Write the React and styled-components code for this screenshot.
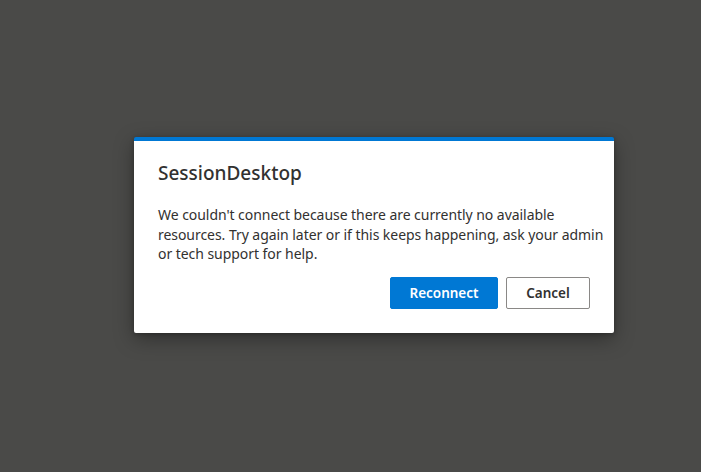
import React from "react";
import styled, { createGlobalStyle } from "styled-components";

const GlobalStyle = createGlobalStyle`
  html, body {
    margin: 0;
    padding: 0;
    height: 100%;
  }
  body {
    background: #4a4a48;
    font-family: "Noto Sans", "Open Sans", sans-serif;
  }
  #root {
    height: 100%;
  }
`;

const Backdrop = styled.div`
  width: 701px;
  height: 472px;
  display: flex;
  justify-content: center;
  padding-top: 137px;
  padding-left: 47px;
  box-sizing: border-box;
`;

const Dialog = styled.div`
  width: 480px;
  height: 196px;
  box-sizing: border-box;
  background: #ffffff;
  border-top: 4px solid #0078d4;
  border-radius: 2px;
  box-shadow: 0 6px 20px rgba(0, 0, 0, 0.35), 0 1px 4px rgba(0, 0, 0, 0.25);
  padding: 19px 24px 24px;
  display: flex;
  flex-direction: column;
`;

const Title = styled.h1`
  margin: 0;
  font-size: 19px;
  line-height: 26px;
  font-weight: 500;
  color: #323130;
`;

const Message = styled.p`
  margin: 19px -20px 0 0;
  font-size: 14px;
  line-height: 19.5px;
  color: #323130;
  letter-spacing: -0.05px;
`;

const Actions = styled.div`
  margin-top: auto;
  display: flex;
  justify-content: flex-end;
  gap: 8px;
`;

const Button = styled.button`
  height: 32px;
  min-width: ${(p) => (p.$primary ? "108px" : "84px")};
  padding: 0 16px;
  box-sizing: border-box;
  font-family: inherit;
  font-size: 13.5px;
  font-weight: 600;
  border-radius: 2px;
  border: 1px solid ${(p) => (p.$primary ? "#0078d4" : "#8a8886")};
  background: ${(p) => (p.$primary ? "#0078d4" : "#ffffff")};
  color: ${(p) => (p.$primary ? "#ffffff" : "#323130")};
  cursor: pointer;
`;

export default function App() {
  return (
    <>
      <GlobalStyle />
      <Backdrop>
        <Dialog>
          <Title>SessionDesktop</Title>
          <Message>
            We couldn't connect because there are currently no available
            resources. Try again later or if this keeps happening, ask your
            admin or tech support for help.
          </Message>
          <Actions>
            <Button $primary>Reconnect</Button>
            <Button>Cancel</Button>
          </Actions>
        </Dialog>
      </Backdrop>
    </>
  );
}
